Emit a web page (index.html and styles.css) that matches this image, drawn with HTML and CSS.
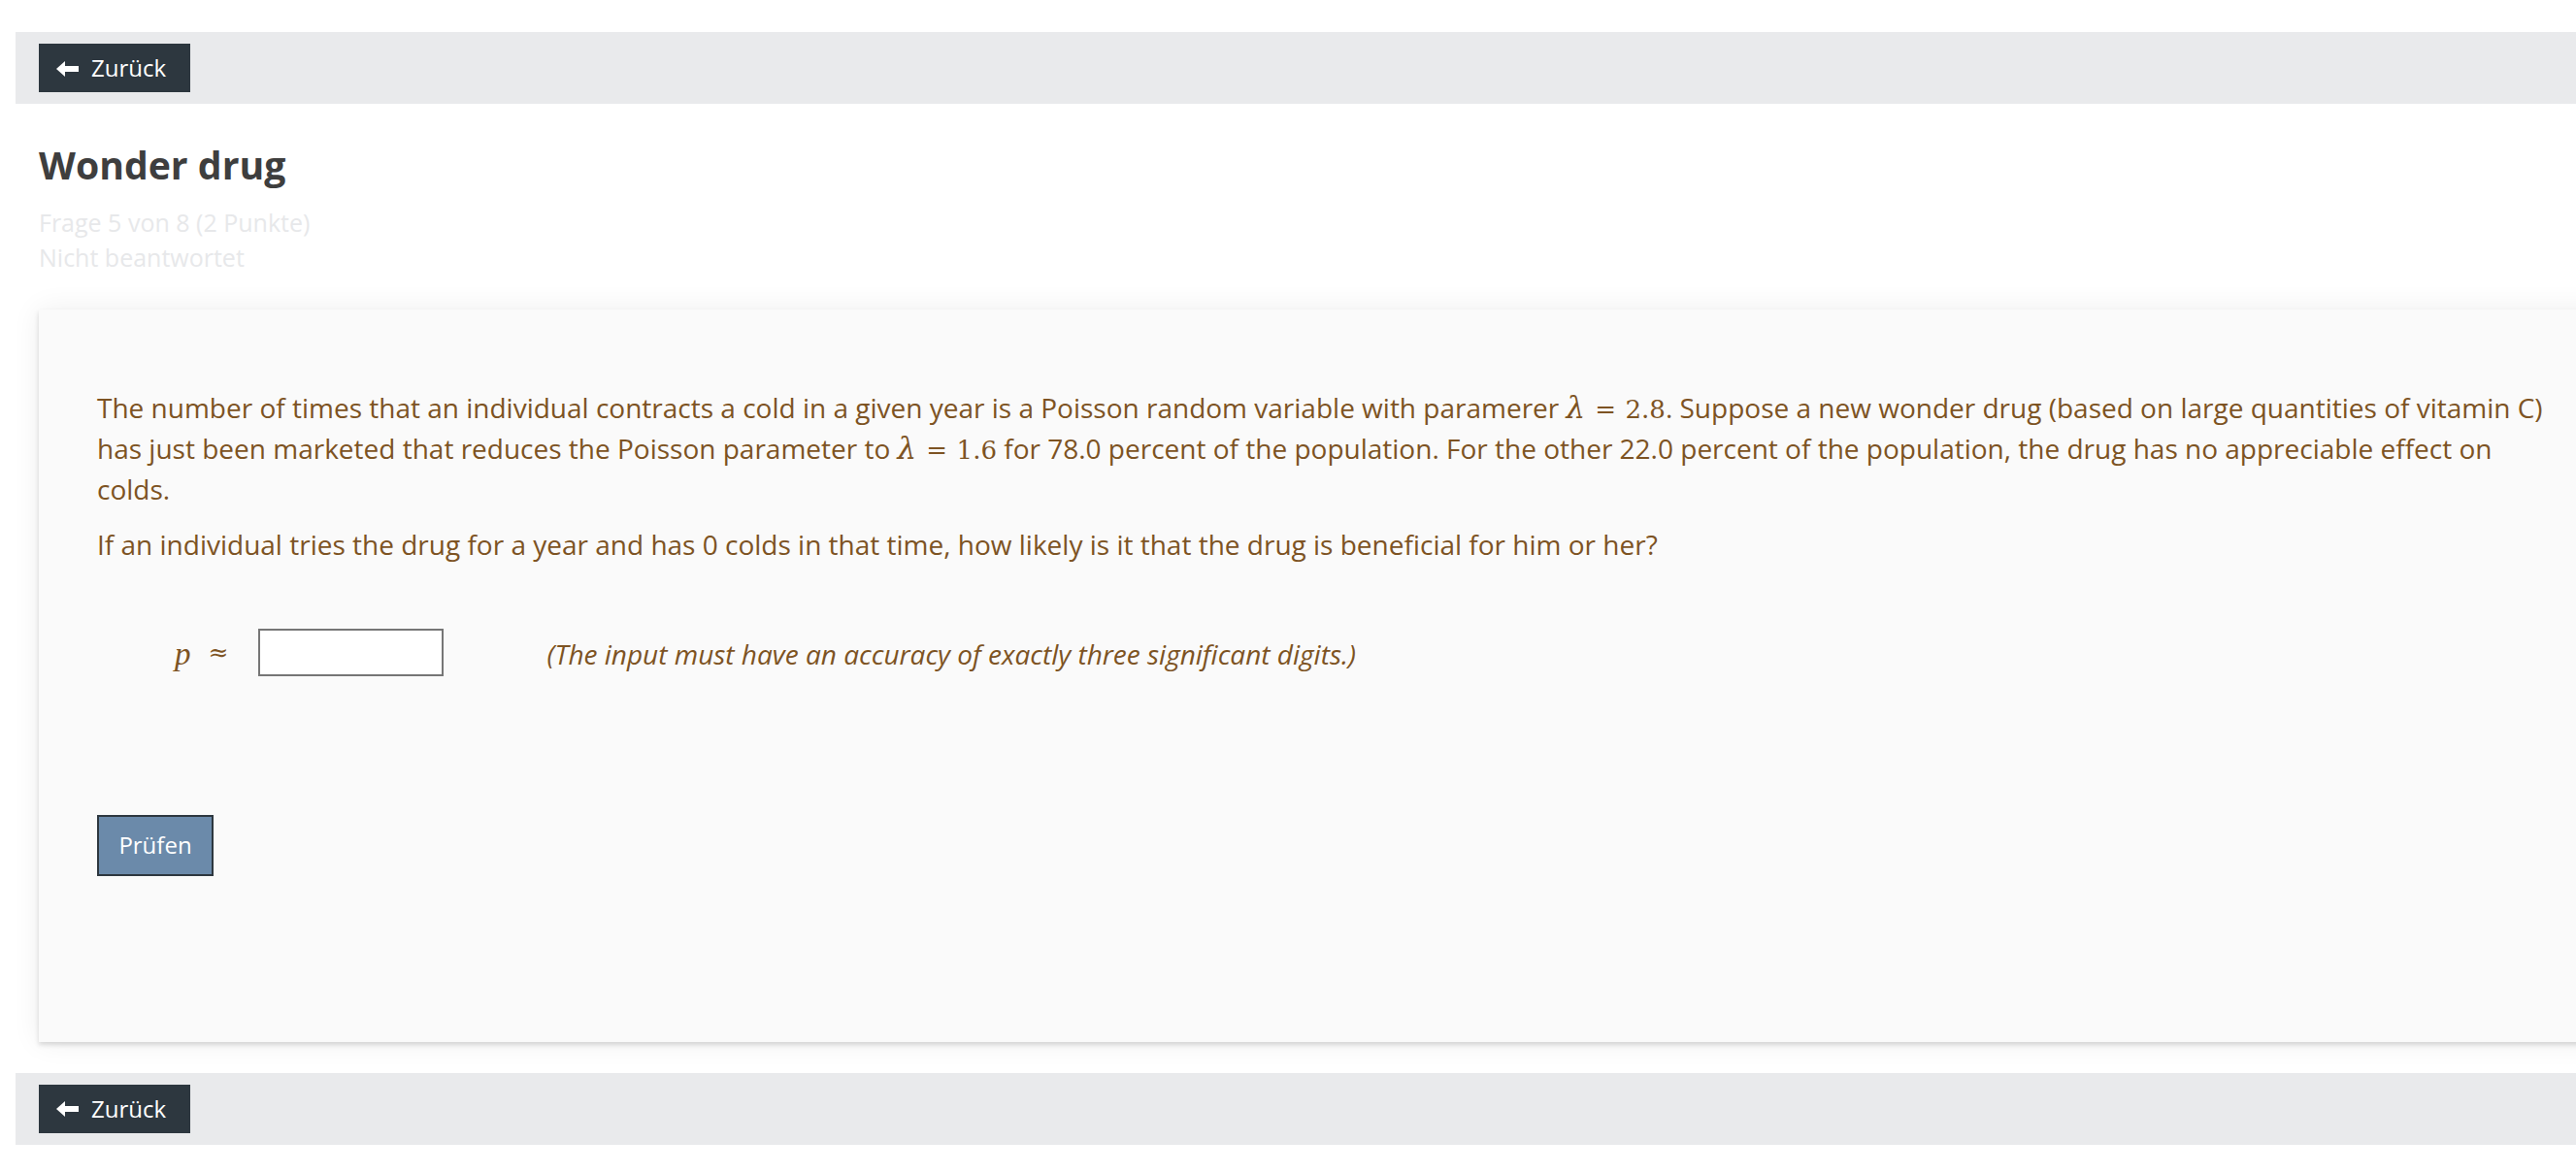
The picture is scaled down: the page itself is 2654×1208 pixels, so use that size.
FILE: index.html
```html
<!DOCTYPE html>
<html lang="de">
<head>
<meta charset="utf-8">
<title>Wonder drug</title>
<link rel="stylesheet" href="styles.css">
</head>
<body>
<div class="page">
  <nav class="navbar">
    <a class="back-btn" href="#">
      <svg class="arrow" viewBox="0 0 23 16" width="23" height="16" aria-hidden="true"><polygon points="0,8 9,0 9,5 23,5 23,11 9,11 9,16" fill="#fff"/></svg>
      <span>Zurück</span>
    </a>
  </nav>

  <header class="qhead">
    <h1 class="title">Wonder drug</h1>
    <div class="meta">Frage 5 von 8 (2 Punkte)</div>
    <div class="meta">Nicht beantwortet</div>
  </header>

  <section class="card">
    <p class="qtext">The number of times that an individual contracts a cold in a given year is a Poisson random variable with paramerer <span class="math"><span class="mi">λ</span><span class="mo">=</span><span class="mn">2.8</span></span>. Suppose a new wonder drug (based on large quantities of vitamin C) has just been marketed that reduces the Poisson parameter to <span class="math"><span class="mi">λ</span><span class="mo">=</span><span class="mn">1.6</span></span> for 78.0 percent of the population. For the other 22.0 percent of the population, the drug has no appreciable effect on colds.</p>
    <p class="qtext">If an individual tries the drug for a year and has 0 colds in that time, how likely is it that the drug is beneficial for him or her?</p>

    <div class="answer-row">
      <span class="var">p</span>
      <span class="approx">≈</span>
      <input class="answer" type="text" aria-label="p">
      <span class="hint">(The input must have an accuracy of exactly three significant digits.)</span>
    </div>

    <button class="check-btn" type="button">Prüfen</button>
  </section>

  <nav class="navbar bottom">
    <a class="back-btn" href="#">
      <svg class="arrow" viewBox="0 0 23 16" width="23" height="16" aria-hidden="true"><polygon points="0,8 9,0 9,5 23,5 23,11 9,11 9,16" fill="#fff"/></svg>
      <span>Zurück</span>
    </a>
  </nav>
</div>
</body>
</html>
```

FILE: styles.css
```css
html, body {
  margin: 0;
  padding: 0;
  background: #ffffff;
  overflow: hidden;
}

body {
  font-family: "Open Sans", "Noto Sans", sans-serif;
  font-size: 28px;
  line-height: 40px;
  color: #7d5323;
}

.page {
  padding-top: 33px;
}

.navbar {
  background: #e9eaec;
  margin-left: 16px;
  height: 74px;
  padding: 12px 0 12px 24px;
  box-sizing: border-box;
  display: flex;
  align-items: flex-start;
}

.navbar.bottom {
  margin-top: 32px;
}

.back-btn {
  display: flex;
  align-items: center;
  height: 50px;
  width: 156px;
  box-sizing: border-box;
  padding-left: 18px;
  background: #2d373f;
  color: #ffffff;
  text-decoration: none;
  font-size: 24px;
  line-height: 50px;
}

.back-btn .arrow {
  display: block;
  margin-right: 13px;
  margin-top: 1px;
}

.qhead {
  margin-left: 40px;
  padding-top: 38px;
}

.title {
  margin: 0;
  font-size: 39.2px;
  line-height: 50px;
  font-weight: 700;
  color: #3e3e3e;
}

.title + .meta {
  margin-top: 16px;
}

.meta {
  font-size: 25px;
  line-height: 36px;
  color: #e7e8ea;
}

.card {
  margin: 36px -40px 0 40px;
  background: #fafafa;
  box-shadow: 0 3px 5px rgba(0, 0, 0, 0.14), 0 0 28px rgba(0, 0, 0, 0.07);
  padding: 81px 58px 171px 60px;
}

.qtext {
  margin: 0 0 16.7px 0;
}

.math {
  font-family: "DejaVu Serif", "Liberation Serif", serif;
  font-size: 26px;
  white-space: nowrap;
  display: inline-block;
}

.math .mi {
  display: inline-block;
  width: 24px;
  font-style: italic;
  font-size: 31px;
}

.math .mo {
  display: inline-block;
  width: 33px;
  text-align: center;
}

.math .mn {
  display: inline-block;
  padding-left: 4px;
}

.answer-row {
  display: flex;
  align-items: center;
  margin: 67px 0 0 80px;
  height: 49px;
}

.var {
  font-family: "Liberation Serif", "DejaVu Serif", serif;
  font-style: italic;
  font-size: 33px;
  margin-top: 4px;
}

.approx {
  font-family: "DejaVu Serif", "Liberation Serif", serif;
  font-size: 25px;
  margin-left: 18px;
  margin-top: 2px;
}

.answer {
  width: 191px;
  height: 49px;
  box-sizing: border-box;
  border: 2px solid #767676;
  background: #ffffff;
  margin: 0 0 0 31px;
  padding: 0 6px;
  font: inherit;
}

.hint {
  font-style: italic;
  margin-left: 106px;
  margin-top: 4px;
}

.check-btn {
  display: block;
  margin-top: 143px;
  height: 63px;
  width: 120px;
  box-sizing: border-box;
  background: #6b8aaa;
  border: 2px solid #2d373f;
  color: #ffffff;
  font-family: "Open Sans", "Noto Sans", sans-serif;
  font-size: 24px;
  line-height: 40px;
  padding: 0;
}
```
